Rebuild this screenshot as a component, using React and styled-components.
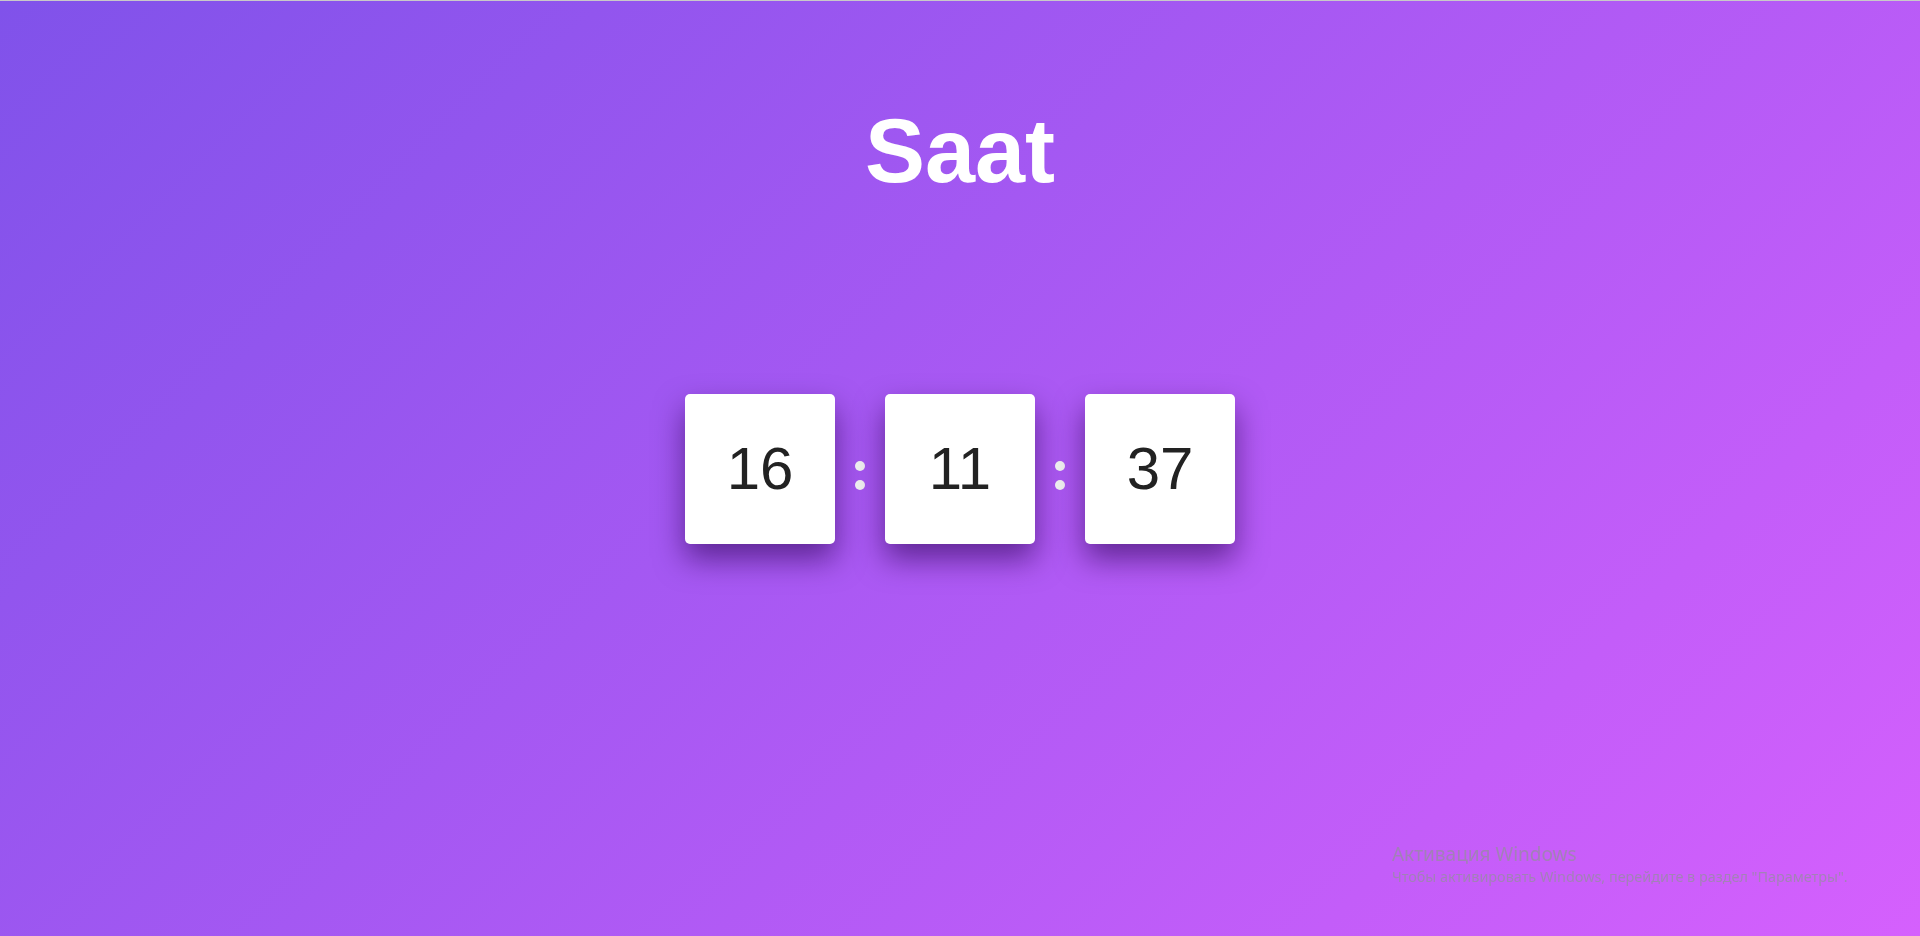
import React, { useState } from "react";
import styled, { createGlobalStyle } from "styled-components";

const GlobalStyle = createGlobalStyle`
  * { box-sizing: border-box; }
  html, body { margin: 0; padding: 0; }
  body {
    font-family: "Liberation Sans", Arial, sans-serif;
    overflow: hidden;
  }
`;

const Page = styled.div`
  height: 936px;
  border-top: 1px solid #c9c9c9;
  background: linear-gradient(135deg, #8052ea 0%, #d560fd 100%);
  display: grid;
  grid-template-rows: 1fr auto 1fr;
  justify-items: center;
`;

const Title = styled.h1`
  margin: 0;
  padding-top: 100px;
  align-self: start;
  font-family: "Liberation Sans", Arial, sans-serif;
  font-weight: 700;
  font-size: 90px;
  line-height: 1.117;
  color: #ffffff;
`;

const Clock = styled.div`
  display: flex;
  align-items: center;
  gap: 20px;
`;

const Tile = styled.div`
  width: 150px;
  height: 150px;
  background: #ffffff;
  border-radius: 5px;
  display: flex;
  align-items: center;
  justify-content: center;
  font-family: "Liberation Sans", Arial, sans-serif;
  font-size: 60px;
  color: #222222;
  box-shadow: 0 15px 30px rgba(45, 5, 85, 0.6);
`;

const Colon = styled.span`
  display: flex;
  flex-direction: column;
  gap: 9px;
  margin-top: 13px;
`;

const Dot = styled.span`
  width: 10px;
  height: 10px;
  border-radius: 50%;
  background: #f0f0f0;
`;

const Watermark = styled.div`
  position: fixed;
  left: 1392px;
  top: 842px;
  font-family: "Noto Sans", "Open Sans", sans-serif;
  color: rgba(150, 140, 160, 0.75);
  pointer-events: none;
`;

const WatermarkTitle = styled.div`
  font-size: 19px;
  line-height: 25px;
`;

const WatermarkText = styled.div`
  font-size: 14.4px;
  line-height: 20px;
`;

const Separator = () => (
  <Colon aria-label=":">
    <Dot />
    <Dot />
  </Colon>
);

export default function App() {
  const [parts] = useState(["16", "11", "37"]);
  return (
    <>
      <GlobalStyle />
      <Page>
        <Title>Saat</Title>
        <Clock>
          <Tile>{parts[0]}</Tile>
          <Separator />
          <Tile>{parts[1]}</Tile>
          <Separator />
          <Tile>{parts[2]}</Tile>
        </Clock>
        <div />
      </Page>
      <Watermark>
        <WatermarkTitle>Активация Windows</WatermarkTitle>
        <WatermarkText>
          Чтобы активировать Windows, перейдите в раздел "Параметры".
        </WatermarkText>
      </Watermark>
    </>
  );
}
